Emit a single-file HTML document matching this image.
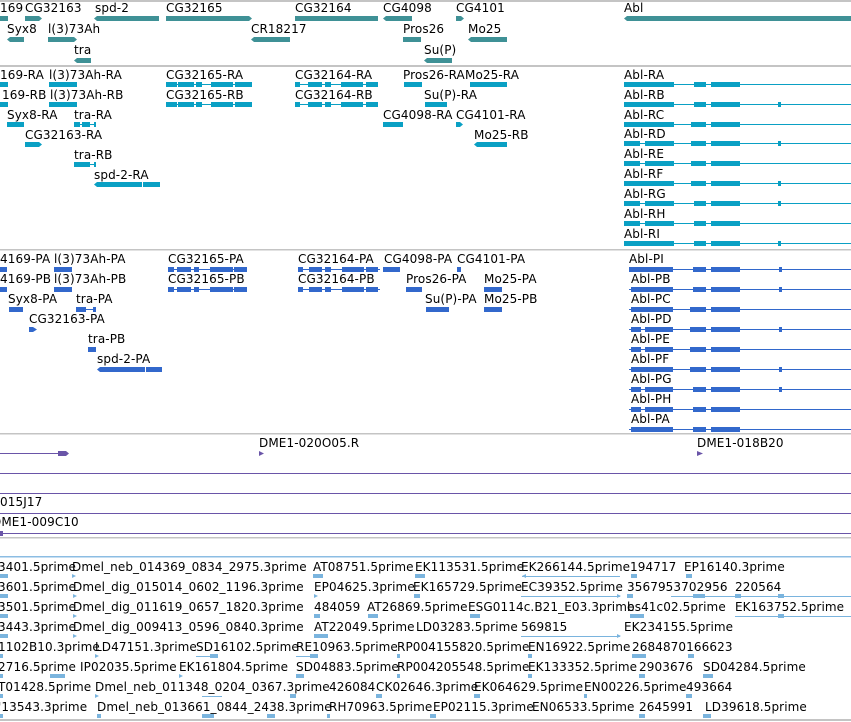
<!DOCTYPE html>
<html><head><meta charset="utf-8"><style>
html,body{margin:0;padding:0;background:#fff;}
body{width:851px;height:722px;position:relative;overflow:hidden;font-family:"DejaVu Sans","Liberation Sans",sans-serif;font-size:12px;letter-spacing:0.1px;color:#000;}
.t{position:absolute;white-space:nowrap;line-height:12px;}
svg{position:absolute;left:0;top:0;}
</style></head><body>
<svg width="851" height="722" viewBox="0 0 851 722">
<g fill="#c4c4c4"><rect x="0" y="0" width="851" height="2"/><rect x="0" y="65" width="851" height="2"/><rect x="0" y="249" width="851" height="1.5"/><rect x="0" y="433" width="851" height="1.5"/><rect x="0" y="537" width="851" height="1.5"/><rect x="0" y="719" width="851" height="2"/></g>
<rect x="0" y="556" width="851" height="1.5" fill="#8cbde3"/>
<g fill="#3f9196">
<rect x="0" y="16" width="8" height="5"/><path d="M25 16h14l3 2.5-3 2.5h-14z"/><path d="M97 16h62v5h-62l-3-2.5z"/><path d="M166 16h83l3 2.5-3 2.5h-83z"/><rect x="295" y="16" width="83" height="5"/><path d="M386 16h26v5h-26l-3-2.5z"/><path d="M456 16h5l3 2.5-3 2.5h-5z"/><path d="M627 16h224v5h-224l-3-2.5z"/>
<path d="M10 37h14v5h-14l-3-2.5z"/><path d="M48 37h26l3 2.5-3 2.5h-26z"/><path d="M254 37h36v5h-36l-3-2.5z"/><rect x="403" y="37" width="18" height="5"/><path d="M471 37h36v5h-36l-3-2.5z"/>
<path d="M77 58h14v5h-14l-3-2.5z"/><path d="M427 58h25v5h-25l-3-2.5z"/>
</g>
<g fill="#0aa0c4">
<rect x="0" y="82" width="8" height="5"/><rect x="49" y="82" width="28" height="5"/>
<rect x="166" y="84" width="86" height="1"/><rect x="166" y="82" width="11" height="5"/><rect x="178" y="82" width="16" height="5"/><rect x="196" y="82" width="6" height="5"/><rect x="211" y="82" width="22" height="5"/><rect x="235" y="82" width="17" height="5"/>
<rect x="295" y="84" width="83" height="1"/><rect x="295" y="82" width="5" height="5"/><rect x="308" y="82" width="14" height="5"/><rect x="325" y="82" width="6" height="5"/><rect x="341" y="82" width="22" height="5"/><rect x="366" y="82" width="12" height="5"/>
<rect x="404" y="82" width="18" height="5"/><rect x="470" y="82" width="37" height="5"/>
<rect x="0" y="102" width="8" height="5"/><rect x="49" y="102" width="28" height="5"/>
<rect x="166" y="104" width="86" height="1"/><rect x="166" y="102" width="11" height="5"/><rect x="178" y="102" width="16" height="5"/><rect x="196" y="102" width="6" height="5"/><rect x="211" y="102" width="22" height="5"/><rect x="235" y="102" width="17" height="5"/>
<rect x="295" y="104" width="83" height="1"/><rect x="295" y="102" width="5" height="5"/><rect x="308" y="102" width="14" height="5"/><rect x="325" y="102" width="6" height="5"/><rect x="341" y="102" width="22" height="5"/><rect x="366" y="102" width="12" height="5"/>
<rect x="425" y="102" width="22" height="5"/>
<rect x="7" y="122" width="17" height="5"/><rect x="74" y="124" width="22" height="1"/><rect x="74" y="122" width="6" height="5"/><rect x="82" y="122" width="8" height="5"/><rect x="94" y="122" width="2" height="5"/><rect x="383" y="122" width="20" height="5"/><path d="M456 122h4l3 2.5-3 2.5h-4z"/>
<path d="M25 142h14l3 2.5-3 2.5h-14z"/><path d="M477 142h30v5h-30l-3-2.5z"/>
<rect x="74" y="164" width="22" height="1"/><rect x="74" y="162" width="16" height="5"/><rect x="94" y="162" width="2" height="5"/>
<path d="M97 182h45v5h-45l-3-2.5z"/><rect x="143" y="182" width="17" height="5"/>
</g>
<g fill="#0aa0c4">
<rect x="624" y="84" width="227" height="1"/><rect x="624" y="82" width="50" height="5"/><rect x="694" y="82" width="12" height="5"/><rect x="711" y="82" width="29" height="5"/>
<rect x="624" y="104" width="227" height="1"/><rect x="624" y="102" width="50" height="5"/><rect x="694" y="102" width="12" height="5"/><rect x="711" y="102" width="29" height="5"/><rect x="778" y="102" width="3" height="5"/>
<rect x="624" y="124" width="227" height="1"/><rect x="624" y="122" width="50" height="5"/><rect x="691" y="122" width="15" height="5"/><rect x="711" y="122" width="29" height="5"/>
<rect x="624" y="143" width="227" height="1"/><rect x="624" y="141" width="16" height="5"/><rect x="645" y="141" width="29" height="5"/><rect x="691" y="141" width="15" height="5"/><rect x="711" y="141" width="29" height="5"/><rect x="778" y="141" width="3" height="5"/>
<rect x="624" y="163" width="227" height="1"/><rect x="624" y="161" width="16" height="5"/><rect x="645" y="161" width="29" height="5"/><rect x="691" y="161" width="15" height="5"/><rect x="711" y="161" width="29" height="5"/>
<rect x="624" y="183" width="227" height="1"/><rect x="624" y="181" width="50" height="5"/><rect x="691" y="181" width="15" height="5"/><rect x="711" y="181" width="29" height="5"/><rect x="778" y="181" width="3" height="5"/>
<rect x="624" y="203" width="227" height="1"/><rect x="624" y="201" width="16" height="5"/><rect x="645" y="201" width="29" height="5"/><rect x="694" y="201" width="12" height="5"/><rect x="711" y="201" width="29" height="5"/><rect x="778" y="201" width="3" height="5"/>
<rect x="624" y="223" width="227" height="1"/><rect x="624" y="221" width="16" height="5"/><rect x="645" y="221" width="29" height="5"/><rect x="694" y="221" width="12" height="5"/><rect x="711" y="221" width="29" height="5"/>
<rect x="624" y="243" width="227" height="1"/><rect x="624" y="241" width="50" height="5"/><rect x="694" y="241" width="12" height="5"/><rect x="711" y="241" width="29" height="5"/><rect x="778" y="241" width="3" height="5"/>
</g>
<g fill="#3268cc">
<rect x="0" y="267" width="7" height="5"/><rect x="54" y="267" width="18" height="5"/>
<rect x="168" y="269" width="79" height="1"/><rect x="168" y="267" width="6" height="5"/><rect x="177" y="267" width="14" height="5"/><rect x="194" y="267" width="5" height="5"/><rect x="210" y="267" width="23" height="5"/><rect x="234" y="267" width="13" height="5"/>
<rect x="298" y="269" width="82" height="1"/><rect x="298" y="267" width="5" height="5"/><rect x="309" y="267" width="13" height="5"/><rect x="325" y="267" width="6" height="5"/><rect x="342" y="267" width="22" height="5"/><rect x="366" y="267" width="12" height="5"/>
<rect x="383" y="267" width="17" height="5"/><rect x="457" y="267" width="4" height="5"/>
<rect x="0" y="287" width="7" height="5"/><rect x="54" y="287" width="18" height="5"/>
<rect x="168" y="289" width="79" height="1"/><rect x="168" y="287" width="6" height="5"/><rect x="177" y="287" width="14" height="5"/><rect x="194" y="287" width="5" height="5"/><rect x="210" y="287" width="23" height="5"/><rect x="234" y="287" width="13" height="5"/>
<rect x="298" y="289" width="82" height="1"/><rect x="298" y="287" width="5" height="5"/><rect x="309" y="287" width="13" height="5"/><rect x="325" y="287" width="6" height="5"/><rect x="342" y="287" width="22" height="5"/><rect x="366" y="287" width="12" height="5"/>
<rect x="406" y="287" width="16" height="5"/><rect x="484" y="287" width="18" height="5"/>
<rect x="9" y="307" width="14" height="5"/><rect x="76" y="309" width="20" height="1"/><rect x="76" y="307" width="10" height="5"/><rect x="93" y="307" width="3" height="5"/><rect x="426" y="307" width="23" height="5"/><rect x="484" y="307" width="18" height="5"/>
<path d="M29 327h4l4 2.5-4 2.5h-4z"/><rect x="88" y="347" width="8" height="5"/>
<path d="M100 367h45v5h-45l-3-2.5z"/><rect x="146" y="367" width="16" height="5"/>
</g>
<g fill="#3268cc">
<rect x="629" y="269" width="222" height="1"/><rect x="629" y="267" width="44" height="5"/><rect x="693" y="267" width="13" height="5"/><rect x="711" y="267" width="29" height="5"/><rect x="779" y="267" width="3" height="5"/>
<rect x="629" y="289" width="222" height="1"/><rect x="631" y="287" width="42" height="5"/><rect x="693" y="287" width="13" height="5"/><rect x="711" y="287" width="29" height="5"/><rect x="779" y="287" width="3" height="5"/>
<rect x="629" y="309" width="222" height="1"/><rect x="631" y="307" width="42" height="5"/><rect x="690" y="307" width="16" height="5"/><rect x="711" y="307" width="29" height="5"/>
<rect x="629" y="329" width="222" height="1"/><rect x="631" y="327" width="10" height="5"/><rect x="645" y="327" width="28" height="5"/><rect x="690" y="327" width="16" height="5"/><rect x="711" y="327" width="29" height="5"/><rect x="779" y="327" width="3" height="5"/>
<rect x="629" y="349" width="222" height="1"/><rect x="631" y="347" width="10" height="5"/><rect x="645" y="347" width="28" height="5"/><rect x="690" y="347" width="16" height="5"/><rect x="711" y="347" width="29" height="5"/>
<rect x="629" y="369" width="222" height="1"/><rect x="631" y="367" width="42" height="5"/><rect x="690" y="367" width="16" height="5"/><rect x="711" y="367" width="29" height="5"/><rect x="779" y="367" width="3" height="5"/>
<rect x="629" y="389" width="222" height="1"/><rect x="631" y="387" width="10" height="5"/><rect x="645" y="387" width="28" height="5"/><rect x="693" y="387" width="13" height="5"/><rect x="711" y="387" width="29" height="5"/><rect x="779" y="387" width="3" height="5"/>
<rect x="629" y="409" width="222" height="1"/><rect x="631" y="407" width="10" height="5"/><rect x="645" y="407" width="28" height="5"/><rect x="693" y="407" width="13" height="5"/><rect x="711" y="407" width="29" height="5"/>
<rect x="629" y="429" width="222" height="1"/><rect x="631" y="427" width="42" height="5"/><rect x="693" y="427" width="13" height="5"/><rect x="711" y="427" width="29" height="5"/>
</g>
<g fill="#6a55a8">
<rect x="0" y="453" width="60" height="1"/><path d="M58 451h8l3 2.5-3 2.5h-8z"/><path d="M259 451l5 2.5-5 2.5z"/><path d="M697 451l6 2.5-6 2.5z"/>
<rect x="0" y="473" width="851" height="1"/><rect x="0" y="493" width="851" height="1"/><rect x="0" y="513" width="851" height="1"/><rect x="0" y="533" width="851" height="1"/><rect x="0" y="531" width="3" height="5"/>
</g>
<g fill="#7ab4de">
<rect x="0" y="574" width="8" height="4"/><path d="M72 574l4 2-4 2z"/><rect x="313" y="574" width="10" height="4"/><rect x="415" y="574" width="10" height="4"/><rect x="522" y="576" width="98" height="1"/><path d="M522 576l4-2v4z"/><rect x="631" y="574" width="6" height="4"/><rect x="686" y="574" width="6" height="4"/>
<rect x="0" y="594" width="8" height="4"/><path d="M73 594l4 2-4 2z"/><path d="M314 594l4 2-4 2z"/><rect x="414" y="594" width="6" height="4"/><rect x="521" y="596" width="99" height="1"/><path d="M617 594l4 2-4 2z"/><rect x="627" y="594" width="6" height="4"/><rect x="671" y="596" width="180" height="1"/><rect x="693" y="594" width="12" height="4"/><rect x="735" y="594" width="6" height="4"/><rect x="778" y="594" width="6" height="4"/>
<rect x="0" y="614" width="8" height="4"/><path d="M73 614l4 2-4 2z"/><rect x="314" y="614" width="6" height="4"/><rect x="368" y="614" width="10" height="4"/><rect x="470" y="614" width="10" height="4"/><rect x="630" y="614" width="14" height="4"/><rect x="735" y="616" width="116" height="1"/><rect x="778" y="614" width="6" height="4"/>
<rect x="0" y="634" width="8" height="4"/><path d="M73 634l4 2-4 2z"/><rect x="314" y="634" width="14" height="4"/><rect x="521" y="636" width="99" height="1"/><path d="M617 634l4 2-4 2z"/>
<rect x="0" y="654" width="3" height="4"/><path d="M95 654l4 2-4 2z"/><rect x="196" y="656" width="20" height="1"/><rect x="210" y="654" width="8" height="4"/><rect x="296" y="656" width="20" height="1"/><rect x="310" y="654" width="8" height="4"/><rect x="397" y="654" width="3" height="4"/><rect x="528" y="654" width="4" height="4"/><rect x="632" y="654" width="14" height="4"/><rect x="688" y="654" width="6" height="4"/>
<rect x="0" y="674" width="3" height="4"/><rect x="50" y="674" width="15" height="4"/><path d="M179 674l4 2-4 2z"/><rect x="296" y="674" width="8" height="4"/><rect x="397" y="674" width="3" height="4"/><rect x="528" y="674" width="4" height="4"/><rect x="639" y="674" width="6" height="4"/><rect x="703" y="674" width="10" height="4"/>
<rect x="0" y="694" width="3" height="4"/><path d="M95 694l4 2-4 2z"/><rect x="202" y="696" width="20" height="1"/><rect x="290" y="694" width="6" height="4"/><rect x="376" y="694" width="6" height="4"/><rect x="474" y="694" width="6" height="4"/><rect x="584" y="694" width="3" height="4"/><rect x="686" y="694" width="6" height="4"/>
<rect x="0" y="714" width="3" height="4"/><rect x="97" y="714" width="4" height="4"/><rect x="202" y="714" width="12" height="4"/><rect x="267" y="714" width="8" height="4"/><rect x="327" y="714" width="3" height="4"/><rect x="430" y="714" width="6" height="4"/><rect x="639" y="714" width="6" height="4"/><rect x="703" y="714" width="8" height="4"/>
</g>
</svg>
<div class="t" style="left:0;top:2px">169</div><div class="t" style="left:25px;top:2px">CG32163</div><div class="t" style="left:95px;top:2px">spd-2</div><div class="t" style="left:166px;top:2px">CG32165</div><div class="t" style="left:295px;top:2px">CG32164</div><div class="t" style="left:383px;top:2px">CG4098</div><div class="t" style="left:456px;top:2px">CG4101</div><div class="t" style="left:624px;top:2px">Abl</div>
<div class="t" style="left:7px;top:23px">Syx8</div><div class="t" style="left:48px;top:23px">l(3)73Ah</div><div class="t" style="left:251px;top:23px">CR18217</div><div class="t" style="left:403px;top:23px">Pros26</div><div class="t" style="left:468px;top:23px">Mo25</div>
<div class="t" style="left:74px;top:44px">tra</div><div class="t" style="left:424px;top:44px">Su(P)</div>
<div class="t" style="left:0;top:69px">169-RA</div><div class="t" style="left:49px;top:69px">l(3)73Ah-RA</div><div class="t" style="left:166px;top:69px">CG32165-RA</div><div class="t" style="left:295px;top:69px">CG32164-RA</div><div class="t" style="left:403px;top:69px">Pros26-RA</div><div class="t" style="left:465px;top:69px">Mo25-RA</div>
<div class="t" style="left:2px;top:89px">169-RB</div><div class="t" style="left:50px;top:89px">l(3)73Ah-RB</div><div class="t" style="left:166px;top:89px">CG32165-RB</div><div class="t" style="left:295px;top:89px">CG32164-RB</div><div class="t" style="left:424px;top:89px">Su(P)-RA</div>
<div class="t" style="left:7px;top:109px">Syx8-RA</div><div class="t" style="left:74px;top:109px">tra-RA</div><div class="t" style="left:383px;top:109px">CG4098-RA</div><div class="t" style="left:456px;top:109px">CG4101-RA</div>
<div class="t" style="left:25px;top:129px">CG32163-RA</div><div class="t" style="left:474px;top:129px">Mo25-RB</div>
<div class="t" style="left:74px;top:149px">tra-RB</div><div class="t" style="left:94px;top:169px">spd-2-RA</div>
<div class="t" style="left:624px;top:69px">Abl-RA</div><div class="t" style="left:624px;top:89px">Abl-RB</div><div class="t" style="left:624px;top:109px">Abl-RC</div><div class="t" style="left:624px;top:128px">Abl-RD</div><div class="t" style="left:624px;top:148px">Abl-RE</div><div class="t" style="left:624px;top:168px">Abl-RF</div><div class="t" style="left:624px;top:188px">Abl-RG</div><div class="t" style="left:624px;top:208px">Abl-RH</div><div class="t" style="left:624px;top:228px">Abl-RI</div>
<div class="t" style="left:0;top:253px">4169-PA</div><div class="t" style="left:54px;top:253px">l(3)73Ah-PA</div><div class="t" style="left:168px;top:253px">CG32165-PA</div><div class="t" style="left:298px;top:253px">CG32164-PA</div><div class="t" style="left:384px;top:253px">CG4098-PA</div><div class="t" style="left:457px;top:253px">CG4101-PA</div>
<div class="t" style="left:0;top:273px">4169-PB</div><div class="t" style="left:54px;top:273px">l(3)73Ah-PB</div><div class="t" style="left:168px;top:273px">CG32165-PB</div><div class="t" style="left:298px;top:273px">CG32164-PB</div><div class="t" style="left:406px;top:273px">Pros26-PA</div><div class="t" style="left:484px;top:273px">Mo25-PA</div>
<div class="t" style="left:8px;top:293px">Syx8-PA</div><div class="t" style="left:76px;top:293px">tra-PA</div><div class="t" style="left:425px;top:293px">Su(P)-PA</div><div class="t" style="left:484px;top:293px">Mo25-PB</div>
<div class="t" style="left:29px;top:313px">CG32163-PA</div><div class="t" style="left:88px;top:333px">tra-PB</div><div class="t" style="left:97px;top:353px">spd-2-PA</div>
<div class="t" style="left:629px;top:253px">Abl-PI</div><div class="t" style="left:631px;top:273px">Abl-PB</div><div class="t" style="left:631px;top:293px">Abl-PC</div><div class="t" style="left:631px;top:313px">Abl-PD</div><div class="t" style="left:631px;top:333px">Abl-PE</div><div class="t" style="left:631px;top:353px">Abl-PF</div><div class="t" style="left:631px;top:373px">Abl-PG</div><div class="t" style="left:631px;top:393px">Abl-PH</div><div class="t" style="left:631px;top:413px">Abl-PA</div>
<div class="t" style="left:259px;top:437px">DME1-020O05.R</div><div class="t" style="left:697px;top:437px">DME1-018B20</div>
<div class="t" style="left:0;top:496px">015J17</div><div class="t" style="left:-8px;top:516px">DME1-009C10</div>
<div class="t" style="left:-2px;top:561px">3401.5prime</div><div class="t" style="left:72px;top:561px">Dmel_neb_014369_0834_2975.3prime</div><div class="t" style="left:313px;top:561px">AT08751.5prime</div><div class="t" style="left:415px;top:561px">EK113531.5prime</div><div class="t" style="left:521px;top:561px">EK266144.5prime</div><div class="t" style="left:630px;top:561px">194717</div><div class="t" style="left:684px;top:561px">EP16140.3prime</div>
<div class="t" style="left:-2px;top:581px">3601.5prime</div><div class="t" style="left:73px;top:581px">Dmel_dig_015014_0602_1196.3prime</div><div class="t" style="left:314px;top:581px">EP04625.3prime</div><div class="t" style="left:413px;top:581px">EK165729.5prime</div><div class="t" style="left:521px;top:581px">EC39352.5prime</div><div class="t" style="left:627px;top:581px">3567953702956</div><div class="t" style="left:735px;top:581px">220564</div>
<div class="t" style="left:-2px;top:601px">3501.5prime</div><div class="t" style="left:73px;top:601px">Dmel_dig_011619_0657_1820.3prime</div><div class="t" style="left:314px;top:601px">484059</div><div class="t" style="left:367px;top:601px">AT26869.5prime</div><div class="t" style="left:468px;top:601px">ESG0114c.B21_E03.3prime</div><div class="t" style="left:627px;top:601px">bs41c02.5prime</div><div class="t" style="left:735px;top:601px">EK163752.5prime</div>
<div class="t" style="left:-2px;top:621px">3443.3prime</div><div class="t" style="left:73px;top:621px">Dmel_dig_009413_0596_0840.3prime</div><div class="t" style="left:314px;top:621px">AT22049.5prime</div><div class="t" style="left:416px;top:621px">LD03283.5prime</div><div class="t" style="left:521px;top:621px">569815</div><div class="t" style="left:624px;top:621px">EK234155.5prime</div>
<div class="t" style="left:-2px;top:641px">1102B10.3prime</div><div class="t" style="left:95px;top:641px">LD47151.3prime</div><div class="t" style="left:196px;top:641px">SD16102.5prime</div><div class="t" style="left:296px;top:641px">RE10963.5prime</div><div class="t" style="left:397px;top:641px">RP004155820.5prime</div><div class="t" style="left:528px;top:641px">EN16922.5prime</div><div class="t" style="left:632px;top:641px">2684870166623</div>
<div class="t" style="left:-2px;top:661px">2716.5prime</div><div class="t" style="left:80px;top:661px">IP02035.5prime</div><div class="t" style="left:179px;top:661px">EK161804.5prime</div><div class="t" style="left:296px;top:661px">SD04883.5prime</div><div class="t" style="left:397px;top:661px">RP004205548.5prime</div><div class="t" style="left:528px;top:661px">EK133352.5prime</div><div class="t" style="left:639px;top:661px">2903676</div><div class="t" style="left:703px;top:661px">SD04284.5prime</div>
<div class="t" style="left:-2px;top:681px">T01428.5prime</div><div class="t" style="left:95px;top:681px">Dmel_neb_011348_0204_0367.3prime</div><div class="t" style="left:329px;top:681px">426084</div><div class="t" style="left:376px;top:681px">CK02646.3prime</div><div class="t" style="left:474px;top:681px">EK064629.5prime</div><div class="t" style="left:584px;top:681px">EN00226.5prime</div><div class="t" style="left:686px;top:681px">493664</div>
<div class="t" style="left:-2px;top:701px">'13543.3prime</div><div class="t" style="left:97px;top:701px">Dmel_neb_013661_0844_2438.3prime</div><div class="t" style="left:329px;top:701px">RH70963.5prime</div><div class="t" style="left:433px;top:701px">EP02115.3prime</div><div class="t" style="left:532px;top:701px">EN06533.5prime</div><div class="t" style="left:639px;top:701px">2645991</div><div class="t" style="left:705px;top:701px">LD39618.5prime</div>
</body></html>
